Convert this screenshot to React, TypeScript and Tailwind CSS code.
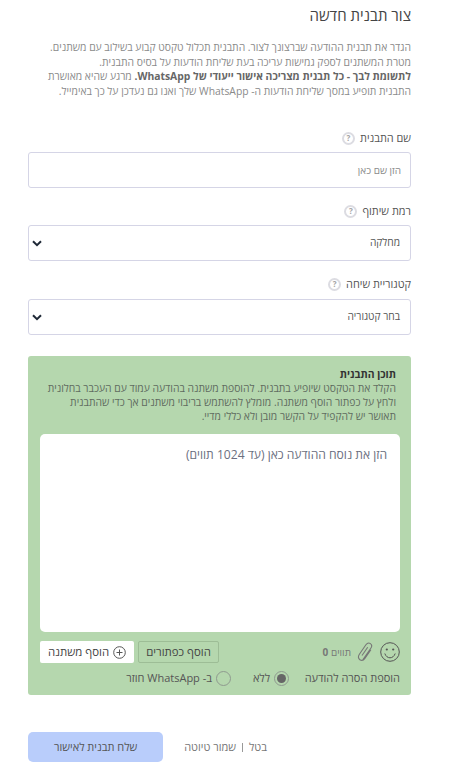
import React from "react";

function Help() {
  return (
    <span className="flex h-[13px] w-[13px] items-center justify-center rounded-full border-2 border-[#dcdce2] text-[8px] font-bold leading-none text-[#a3a3a3]">
      ?
    </span>
  );
}

function Chevron() {
  return (
    <svg width="10" height="7" viewBox="0 0 10 7" fill="none" className="shrink-0">
      <path d="M1 1.2 5 5.2 9 1.2" stroke="#1f2937" strokeWidth="2" />
    </svg>
  );
}

function Label({ text }: { text: string }) {
  return (
    <div className="flex h-[18px] items-center gap-[5px] text-[10.9px] text-[#555]">
      <span>{text}</span>
      <Help />
    </div>
  );
}

function Select({ text }: { text: string }) {
  return (
    <div className="flex h-[36px] items-center justify-between rounded-[3px] border border-[#d5d5e6] bg-white pl-[3px] pr-[10px] text-[10.2px] text-[#555]">
      <span>{text}</span>
      <Chevron />
    </div>
  );
}

function Radio({ on }: { on?: boolean }) {
  return (
    <span className="flex h-[15px] w-[15px] items-center justify-center rounded-full border border-[#8f9a8f]">
      {on && <span className="h-[9px] w-[9px] rounded-full bg-[#666]" />}
    </span>
  );
}

export default function App() {
  return (
    <div
      dir="rtl"
      className="h-[773px] w-[450px] overflow-hidden bg-white pl-[28px] pr-[39px] font-['Open_Sans','Noto_Sans','DejaVu_Sans',sans-serif]"
    >
      <h1 className="mt-[4px] h-[22px] text-[15px] font-normal leading-[22px] text-[#444]">צור תבנית חדשה</h1>

      <div className="mt-[14px] h-[59px] whitespace-nowrap text-[10.35px] leading-[14.67px] text-[#8a8a8a]">
        <div>הגדר את תבנית ההודעה שברצונך לצור. התבנית תכלול טקסט קבוע בשילוב עם משתנים.</div>
        <div>מטרת המשתנים לספק גמישות עריכה בעת שליחת הודעות על בסיס התבנית.</div>
        <div>
          <b className="text-[#666]">לתשומת לבך - כל תבנית מצריכה אישור ייעודי של WhatsApp.</b> מרגע שהיא מאושרת
        </div>
        <div>התבנית תופיע במסך שליחת הודעות ה- WhatsApp שלך ואנו גם נעדכן על כך באימייל.</div>
      </div>

      <div className="mt-[30px]">
        <Label text="שם התבנית" />
      </div>
      <div className="mt-[5px] flex h-[36px] items-center rounded-[3px] border border-[#d5d5e6] bg-white pr-[9px] text-[10px] text-[#8a8a8a]">
        הזן שם כאן
      </div>

      <div className="mt-[14px] mb-[5px]">
        <Label text="רמת שיתוף" />
      </div>
      <Select text="מחלקה" />

      <div className="mt-[14px] mb-[6px]">
        <Label text="קטגוריית שיחה" />
      </div>
      <Select text="בחר קטגוריה" />

      <section className="mt-[21px] h-[339px] rounded-[3px] bg-[#b5d7ae] pl-[12px] pr-[11px] pt-[11px]">
        <div className="pr-[4px] text-[10.35px] font-bold leading-[14px] text-[#333]">תוכן התבנית</div>
        <div className="whitespace-nowrap pr-[4px] text-[10.35px] leading-[14px] text-[#5f6b5f]">
          <div>הקלד את הטקסט שיופיע בתבנית. להוספת משתנה בהודעה עמוד עם העכבר בחלונית</div>
          <div>ולחץ על כפתור הוסף משתנה. מומלץ להשתמש בריבוי משתנים אך כדי שהתבנית</div>
          <div>תאושר יש להקפיד על הקשר מובן ולא כללי מדיי.</div>
        </div>

        <div className="mt-[11px] h-[198px] rounded-[5px] bg-white px-[13px] pt-[11px] text-[12.1px] leading-[20px] text-[#6b6f80]">
          הזן את נוסח ההודעה כאן (עד 1024 תווים)
        </div>

        <div className="mt-[9px] flex h-[22px] items-center">
          <svg width="20" height="20" viewBox="0 0 20 20" fill="none" stroke="#555" strokeWidth="1" className="shrink-0">
            <circle cx="10" cy="10" r="9.3" />
            <circle cx="6.8" cy="7.5" r="1.1" fill="#555" stroke="none" />
            <circle cx="13.2" cy="7.5" r="1.1" fill="#555" stroke="none" />
            <path d="M4.8 11.5c1 3 3.2 4.3 5.2 4.3s4.200-1.300 5.200-4.300" />
          </svg>
          <svg width="17" height="20" viewBox="0 0 17 20" fill="none" stroke="#777" strokeWidth="1.1" className="mr-[6px] shrink-0">
            <path d="M6 17.500 13.800 6.300c1.400-2 1-3.700-.4-4.700s-3.200-.6-4.500 1.200L2.400 12.200c-1.600 2.300-1.100 4.400.5 5.500s3.500.8 5-1.300l6-8.600" />
            <path d="M5 13.500 10.700 5.300" />
          </svg>
          <span className="mr-[6px] text-[10px] text-[#777]">
            תווים <b>0</b>
          </span>
          <div className="mr-auto flex items-center gap-[4px]">
            <div className="flex h-[22px] w-[81px] items-center justify-center rounded-[2px] border border-[#9dbd96] text-[11.4px] text-[#444]">
              הוסף כפתורים
            </div>
            <div className="flex h-[22px] w-[94px] items-center justify-center gap-[4px] rounded-[2px] bg-white text-[11.4px] text-[#444]">
              <svg width="13" height="13" viewBox="0 0 13 13" fill="none" stroke="#555" strokeWidth="1">
                <circle cx="6.500" cy="6.500" r="5.800" />
                <path d="M6.500 3.500v6M3.500 6.500h6" />
              </svg>
              הוסף משתנה
            </div>
          </div>
        </div>

        <div className="mt-[7px] flex h-[16px] items-center text-[11px] text-[#555]">
          <span className="w-[111px]">הוספת הסרה להודעה</span>
          <Radio on />
          <span className="mr-[4px] w-[39px]">ללא</span>
          <Radio />
          <span className="mr-[4px]">ב- WhatsApp חוזר</span>
        </div>
      </section>

      <div className="mt-[37px] flex items-center">
        <div className="mr-[144px] flex items-center gap-[6px] text-[11px] text-[#777]">
          <span>בטל</span>
          <span className="h-[9px] w-px bg-[#999]" />
          <span>שמור טיוטה</span>
        </div>
        <div className="mr-[21px] flex h-[30px] w-[135px] items-center justify-center rounded-[5px] bg-[#b9cdfb] text-[11px] text-[#555]">
          שלח תבנית לאישור
        </div>
      </div>
    </div>
  );
}
